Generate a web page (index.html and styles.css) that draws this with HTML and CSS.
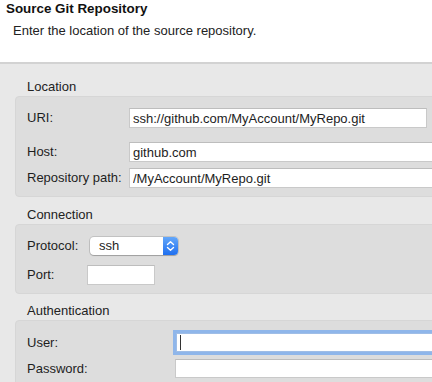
FILE: index.html
```html
<!DOCTYPE html>
<html lang="en">
<head>
    <meta charset="UTF-8">
    <meta name="viewport" content="width=device-width, initial-scale=1.0">
    <title>Source Git Repository</title>
    <link rel="stylesheet" href="styles.css">
</head>
<body>
    <div class="header">
        <h1 class="title">Source Git Repository</h1>
        <p class="subtitle">Enter the location of the source repository.</p>
    </div>

    <div class="content">
        <section class="group">
            <h2 class="legend">Location</h2>
            <div class="box box-location">
                <div class="row row-uri">
                    <label class="lbl" for="uri">URI:</label>
                    <input class="field field-uri" id="uri" value="ssh://github.com/MyAccount/MyRepo.git">
                </div>
                <div class="row row-host">
                    <label class="lbl" for="host">Host:</label>
                    <input class="field" id="host" value="github.com">
                </div>
                <div class="row row-path">
                    <label class="lbl" for="path">Repository path:</label>
                    <input class="field" id="path" value="/MyAccount/MyRepo.git">
                </div>
            </div>
        </section>

        <section class="group">
            <h2 class="legend">Connection</h2>
            <div class="box box-connection">
                <div class="row">
                    <span class="lbl">Protocol:</span>
                    <div class="popup">
                        <span class="popup-text">ssh</span>
                        <span class="stepper">
                            <svg width="9" height="12" viewBox="0 0 9 12">
                                <path d="M1.5 4.5 L4.5 1.8 L7.5 4.5 M1.5 7.5 L4.5 10.2 L7.5 7.5" fill="none" stroke="#fff" stroke-width="1.4" stroke-linecap="round" stroke-linejoin="round"/>
                            </svg>
                        </span>
                    </div>
                </div>
                <div class="row row-port">
                    <label class="lbl" for="port">Port:</label>
                    <input class="field field-port" id="port" value="">
                </div>
            </div>
        </section>

        <section class="group group-auth">
            <h2 class="legend">Authentication</h2>
            <div class="box box-auth">
                <div class="row">
                    <label class="lbl" for="user">User:</label>
                    <div class="focus-wrap">
                        <input class="field field-focus" id="user" value="">
                        <span class="caret"></span>
                    </div>
                </div>
                <div class="row row-password">
                    <label class="lbl" for="password">Password:</label>
                    <input class="field field-password" id="password" type="password" value="">
                </div>
            </div>
        </section>
    </div>
</body>
</html>
```

FILE: styles.css
```css
html, body {
    margin: 0;
    padding: 0;
    height: 100%;
}
body {
    font-family: "Liberation Sans", Arial, sans-serif;
    font-size: 13px;
    color: #1d1d1d;
    background-color: #e8e8e8;
    overflow: hidden;
}
.header {
    background-color: #fff;
    border-bottom: 2px solid #d2d2d2;
    box-sizing: border-box;
    height: 64px;
    padding: 1px 0 0 6px;
}
.title {
    margin: 0;
    font-size: 13.4px;
    line-height: 16px;
    font-weight: bold;
    color: #111;
}
.subtitle {
    margin: 6px 0 0 7px;
    line-height: 16px;
    color: #222;
}
.content {
    padding: 15px 0 0 15px;
}
.group {
    margin-bottom: 10px;
}
.legend {
    margin: 0 0 1px 12px;
    font-size: 13px;
    font-weight: normal;
    line-height: 16px;
    color: #222;
}
.box {
    background-color: #dddddd;
    border: 1px solid #d6d6d6;
    border-radius: 4px;
    width: 460px;
    box-sizing: border-box;
    padding: 11px 0 8px 11px;
}
.row {
    display: grid;
    align-items: center;
}
.box-location .row {
    grid-template-columns: 102px 1fr;
}
.box-connection .row {
    grid-template-columns: 60px 1fr;
}
.box-auth .row {
    grid-template-columns: 148px 1fr;
}
.lbl {
    line-height: 16px;
    color: #1d1d1d;
    white-space: nowrap;
}
.field {
    font-family: inherit;
    font-size: 13px;
    color: #1d1d1d;
    height: 20px;
    box-sizing: border-box;
    margin: 0;
    padding: 0 3px;
    border: 1px solid #c9c9c9;
    border-top-color: #bdbdbd;
    background-color: #fff;
    border-radius: 0;
    outline: none;
}
.field-uri {
    width: 298px;
}
.row-host {
    margin-top: 14px;
}
.row-path {
    margin-top: 6px;
}
.box-connection {
    padding-top: 12px;
    padding-bottom: 8px;
}
.popup {
    position: relative;
    margin-left: 3px;
    width: 88px;
    height: 18px;
    background-color: #fff;
    border-radius: 4px;
    box-shadow: 0 0 0 1px rgba(0, 0, 0, 0.12), 0 1px 1px rgba(0, 0, 0, 0.18);
    display: flex;
    align-items: center;
    justify-content: space-between;
    overflow: hidden;
}
.popup-text {
    padding-left: 9px;
    line-height: 16px;
}
.stepper {
    width: 15px;
    height: 18px;
    background: linear-gradient(#63a7fa, #1f6fef);
    display: flex;
    align-items: center;
    justify-content: center;
}
.row-port {
    margin-top: 10px;
}
.field-port {
    width: 68px;
}
.group-auth {
    margin-top: -1px;
}
.box-auth {
    padding-top: 12px;
}
.focus-wrap {
    position: relative;
    display: flex;
}
.field-focus {
    width: 100%;
    height: 19px;
    margin-left: 1px;
    border-color: #9fbde6;
    box-shadow: 0 0 0 3px #8fb6ea;
}
.caret {
    position: absolute;
    left: 5px;
    top: 2px;
    width: 1px;
    height: 15px;
    background-color: #333;
}
.row-password {
    margin-top: 7px;
}
.field-password {
    width: 100%;
    height: 19px;
}
```
